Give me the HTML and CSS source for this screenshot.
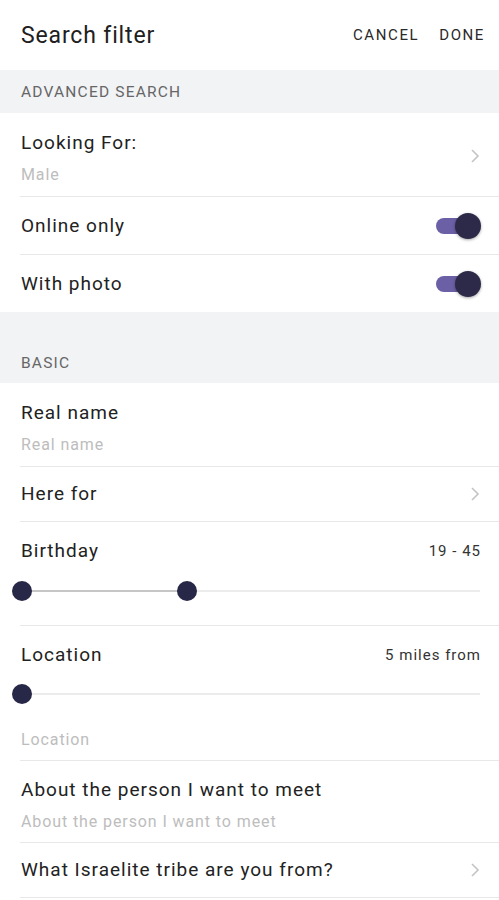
FILE: index.html
```
<!DOCTYPE html>
<html>
<head>
<meta charset="utf-8">
<link rel="stylesheet" href="styles.css">
</head>
<body>
<div class="app">
  <header class="topbar">
    <h1 class="title">Search filter</h1>
    <div class="actions">
      <span class="action">CANCEL</span>
      <span class="action">DONE</span>
    </div>
  </header>

  <div class="section section-adv"><span>ADVANCED SEARCH</span></div>

  <div class="row row-two">
    <div class="texts">
      <div class="label">Looking For:</div>
      <div class="sub">Male</div>
    </div>
    <svg class="chev" width="10" height="16" viewBox="0 0 10 16"><path d="M2 2 L8 8 L2 14" fill="none" stroke="#c4c4c4" stroke-width="1.6"/></svg>
  </div>

  <div class="row row-one">
    <div class="label">Online only</div>
    <div class="toggle"><span class="knob"></span></div>
  </div>

  <div class="row row-one last">
    <div class="label">With photo</div>
    <div class="toggle"><span class="knob"></span></div>
  </div>

  <div class="section section-basic"><span>BASIC</span></div>

  <div class="row row-two">
    <div class="texts">
      <div class="label">Real name</div>
      <div class="sub">Real name</div>
    </div>
  </div>

  <div class="row row-here">
    <div class="label">Here for</div>
    <svg class="chev" width="10" height="16" viewBox="0 0 10 16"><path d="M2 2 L8 8 L2 14" fill="none" stroke="#c4c4c4" stroke-width="1.6"/></svg>
  </div>

  <div class="row row-slider">
    <div class="slider-head">
      <div class="label">Birthday</div>
      <div class="value">19 - 45</div>
    </div>
    <div class="slider">
      <div class="track"><div class="fill" style="width:165px"></div></div>
      <span class="thumb" style="left:-8px"></span>
      <span class="thumb" style="left:157px"></span>
    </div>
  </div>

  <div class="row row-location">
    <div class="slider-head">
      <div class="label">Location</div>
      <div class="value">5 miles from</div>
    </div>
    <div class="slider">
      <div class="track"></div>
      <span class="thumb" style="left:-8px"></span>
    </div>
    <div class="sub loc-sub">Location</div>
  </div>

  <div class="row row-two row-about">
    <div class="texts">
      <div class="label">About the person I want to meet</div>
      <div class="sub">About the person I want to meet</div>
    </div>
  </div>

  <div class="row row-tribe">
    <div class="label">What Israelite tribe are you from?</div>
    <svg class="chev" width="10" height="16" viewBox="0 0 10 16"><path d="M2 2 L8 8 L2 14" fill="none" stroke="#c4c4c4" stroke-width="1.6"/></svg>
  </div>
</div>
</body>
</html>
```

FILE: styles.css
```
* { box-sizing: border-box; }
html, body { margin: 0; padding: 0; background: #fff; }
body { font-family: Roboto, "Noto Sans", Arial, sans-serif; color: #222; }
.app { width: 499px; }

.topbar {
  height: 70px;
  display: flex;
  align-items: center;
  justify-content: space-between;
  padding: 0 14px 0 21px;
}
.title { margin: 0; font-size: 23px; font-weight: 400; color: #202020; letter-spacing: 0.85px; }
.actions { display: flex; gap: 20px; }
.action { font-size: 15px; letter-spacing: 1.6px; color: #2a2a2a; }

.section {
  background: #f2f3f5;
  padding-left: 21px;
  display: flex;
  align-items: center;
  font-size: 15.5px;
  color: #666;
  letter-spacing: 1.2px;
}
.section-adv { height: 43px; }
.section-basic { height: 71px; align-items: flex-end; padding-bottom: 11px; }

.row {
  margin-left: 20px;
  padding-right: 19px;
  border-bottom: 1px solid #e8e8e8;
  display: flex;
  align-items: center;
  justify-content: space-between;
}
.row.last { border-bottom: none; height: 57px; }
.label { font-size: 19px; line-height: 22px; letter-spacing: 1px; color: #222; }
.sub { font-size: 16px; line-height: 20px; letter-spacing: 0.9px; color: #bdbdbd; }
.texts { display: flex; flex-direction: column; gap: 11px; }
.row .label, .row .sub { padding-left: 1px; }

.row-two { height: 84px; align-items: flex-start; padding-top: 19px; }
.row-two .chev { margin-top: 16px; }
.row-one { height: 58px; }
.row-here { height: 55px; }
.row-tribe { height: 55px; }
.row-about { height: 82px; padding-top: 18px; }

.toggle {
  position: relative;
  width: 44px;
  height: 16px;
  border-radius: 8px;
  background: #6b5fa5;
}
.knob {
  position: absolute;
  right: -1px;
  top: -5px;
  width: 26px;
  height: 26px;
  border-radius: 50%;
  background: #2c2a48;
  box-shadow: 0 1px 3px rgba(0,0,0,0.35);
}

.row-slider, .row-location {
  flex-direction: column;
  align-items: stretch;
  justify-content: flex-start;
  padding-top: 18px;
}
.row-slider { height: 104px; }
.row-location { height: 135px; }
.slider-head { display: flex; justify-content: space-between; align-items: center; }
.value { font-size: 15px; line-height: 22px; color: #333; letter-spacing: 1px; margin-right: -1px; }
.slider { position: relative; height: 20px; margin-top: 19px; }
.row-location .slider { margin-top: 18px; }
.track {
  position: absolute;
  left: 2px;
  right: 0;
  top: 9px;
  height: 2px;
  background: #ececec;
}
.fill { height: 2px; background: #c6c6c6; }
.thumb {
  position: absolute;
  top: 0;
  width: 20px;
  height: 20px;
  border-radius: 50%;
  background: #272747;
}
.loc-sub { margin-top: 26px; }
```
